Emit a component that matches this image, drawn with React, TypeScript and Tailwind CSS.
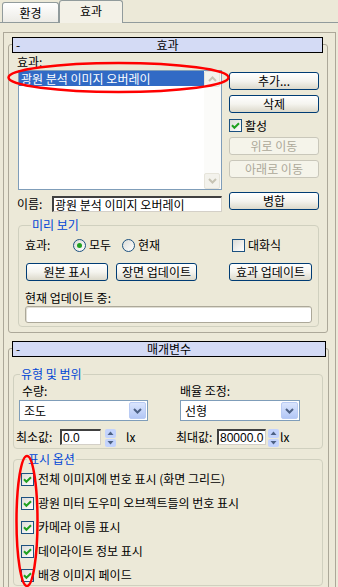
import React from 'react';

type Kids = { children?: React.ReactNode; className?: string };

const Button: React.FC<Kids & { disabled?: boolean }> = ({ children, className = '', disabled }) => (
  <div
    className={
      'h-[18px] flex items-center justify-center rounded-[3px] border whitespace-nowrap ' +
      (disabled
        ? 'border-[#c9c7ba] bg-[#f5f4ea] text-[#aca899] '
        : 'border-[#003c74] bg-linear-to-b from-white via-[#f5f4ef] to-[#dcd9cb] text-black ') +
      className
    }
  >
    {children}
  </div>
);

const CheckBox: React.FC<{ checked?: boolean }> = ({ checked }) => (
  <div className="w-[13px] h-[13px] shrink-0 border border-[#1c5180] bg-linear-to-br from-[#dcdcd7] to-white flex items-center justify-center">
    {checked && (
      <svg width="9" height="9" viewBox="0 0 9 9">
        <path d="M1 4.3 L3.4 6.8 L8 2.2" fill="none" stroke="#21a121" strokeWidth="2" />
      </svg>
    )}
  </div>
);

const Radio: React.FC<{ checked?: boolean }> = ({ checked }) => (
  <div className="w-[13px] h-[13px] shrink-0 rounded-full border border-[#1c5180] bg-linear-to-br from-[#dcdcd7] to-white flex items-center justify-center">
    {checked && <div className="w-[5px] h-[5px] rounded-full bg-[#21a121]" />}
  </div>
);

const Group: React.FC<Kids & { title: string }> = ({ title, className = '', children }) => (
  <fieldset className={'border border-[#d0d0bf] rounded-[4px] ' + className}>
    <legend className="ml-[6px] px-[1px] text-[#0046d5] leading-[14px]">{title}</legend>
    {children}
  </fieldset>
);

const Edit: React.FC<{ value: string; className?: string }> = ({ value, className = '' }) => (
  <div
    className={
      'h-[16px] bg-white border-t-2 border-l-2 border-r border-b border-t-[#404040] border-l-[#404040] border-r-[#d4d0c8] border-b-[#d4d0c8] flex items-center pl-[1px] whitespace-nowrap overflow-hidden ' +
      className
    }
  >
    {value}
  </div>
);

const Select: React.FC<{ value: string; className?: string }> = ({ value, className = '' }) => (
  <div className={'h-[21px] border border-[#7f9db9] bg-white flex items-center ' + className}>
    <span className="flex-1 pl-[4px]">{value}</span>
    <div className="w-[17px] h-[17px] mr-px rounded-[2px] border border-[#b9cbf4] bg-linear-to-b from-[#dae5fd] to-[#b3c7f6] flex items-center justify-center">
      <svg width="9" height="6" viewBox="0 0 9 6">
        <path d="M1 1 L4.5 4.5 L8 1" fill="none" stroke="#4d6185" strokeWidth="2" />
      </svg>
    </div>
  </div>
);

const Spinner: React.FC<{ className?: string }> = ({ className = '' }) => (
  <div className={'w-[11px] h-[18px] flex flex-col gap-px ' + className}>
    <div className="flex-1 rounded-[2px] bg-[#c3d3fd] flex items-center justify-center">
      <svg width="7" height="4" viewBox="0 0 7 4">
        <path d="M0.5 4 L3.5 0.5 L6.5 4Z" fill="#4d6185" />
      </svg>
    </div>
    <div className="flex-1 rounded-[2px] bg-[#c3d3fd] flex items-center justify-center">
      <svg width="7" height="4" viewBox="0 0 7 4">
        <path d="M0.5 0 L3.5 3.5 L6.5 0Z" fill="#4d6185" />
      </svg>
    </div>
  </div>
);

const ScrollArrow: React.FC<{ up?: boolean }> = ({ up }) => (
  <div className="w-[16px] h-[16px] rounded-[2px] border border-[#e6e4da] bg-[#f3f2ec] flex items-center justify-center">
    <svg width="9" height="6" viewBox="0 0 9 6">
      <path d={up ? 'M1 5 L4.5 1.5 L8 5' : 'M1 1 L4.5 4.5 L8 1'} fill="none" stroke="#c6c3b4" strokeWidth="2" />
    </svg>
  </div>
);

const Rollout: React.FC<Kids & { title: string; wide?: boolean }> = ({ title, wide, className = '', children }) => (
  <div className={'border border-[#aca899] rounded-[3px] ' + (wide ? 'w-[321px] ' : 'w-[320px] ') + className}>
    <div
      className={
        '-mt-[8px] ml-[3px] h-[16px] border border-black bg-[#d4dbf5] flex items-center ' +
        (wide ? 'w-[314px]' : 'w-[311px]')
      }
    >
      <span className="w-[14px] pl-[3px]">-</span>
      <span className="flex-1 text-center">{title}</span>
      <span className="w-[14px]" />
    </div>
    {children}
  </div>
);

export default function App() {
  return (
    <div className="relative w-[338px] h-[587px] overflow-hidden bg-[#ece9d8] text-black text-[12px] leading-[14px] font-['Noto_Sans_CJK_KR','Liberation_Sans',sans-serif]">
      {/* tabs */}
      <div className="h-[23px] pl-[2px] flex items-end border-b border-[#919b9c]">
        <div className="w-[57px] h-[20px] border-l border-t border-r border-[#919b9c] rounded-t-[3px] bg-linear-to-b from-white to-[#ecebe5] flex items-center justify-center">
          환경
        </div>
        <div className="relative z-10 -mb-px w-[64px] h-[23px] border-l border-t border-r border-[#919b9c] rounded-t-[3px] bg-[#f3f1e7] flex items-center justify-center pb-[2px]">
          효과
        </div>
      </div>

      {/* outer rollout container */}
      <div className="mt-[9px] ml-[3px] w-[333px] h-[560px] border-l border-t border-r border-[#aca899] pl-[4px] pt-[11px]">
        <Rollout title="효과">
          <div className="pl-[8px] flex items-start">
            <div className="w-[205px]">
              <div className="mt-[2px] h-[15px]">효과:</div>
              <div className="ml-px w-[204px] h-[120px] border border-[#7f9db9] bg-white flex">
                <div className="flex-1">
                  <div className="h-[15px] bg-[#316ac5] text-white pl-[2px] flex items-center whitespace-nowrap">
                    광원 분석 이미지 오버레이
                  </div>
                </div>
                <div className="w-[17px] flex flex-col justify-between pr-px bg-[#fbfbf9]">
                  <ScrollArrow up />
                  <ScrollArrow />
                </div>
              </div>
              <div className="mt-[6px] h-[16px] flex items-center">
                <span className="w-[35px]">이름:</span>
                <Edit value="광원 분석 이미지 오버레이" className="w-[170px]" />
              </div>
            </div>
            <div className="ml-[7px] w-[90px] mt-[19px] flex flex-col">
              <Button>추가...</Button>
              <Button className="mt-[5px]">삭제</Button>
              <div className="mt-[6px] h-[13px] flex items-center gap-[3px]">
                <CheckBox checked />
                <span>활성</span>
              </div>
              <Button disabled className="mt-[5px]">위로 이동</Button>
              <Button disabled className="mt-[5px]">아래로 이동</Button>
              <Button className="mt-[14px]">병합</Button>
            </div>
          </div>

          <div className="pl-[9px] pb-[5px]">
            <Group title="미리 보기" className="mt-[6px] w-[301px] pl-[6px] pb-[3px]">
              <div className="mt-[5px] h-[16px] flex items-center">
                <span className="w-[48px]">효과:</span>
                <Radio checked />
                <span className="ml-[3px] w-[33px]">모두</span>
                <Radio />
                <span className="ml-[3px] w-[94px]">현재</span>
                <CheckBox />
                <span className="ml-[3px]">대화식</span>
              </div>
              <div className="mt-[10px] h-[18px] flex">
                <Button className="ml-px w-[82px]">원본 표시</Button>
                <Button className="ml-[8px] w-[81px]">장면 업데이트</Button>
                <Button className="ml-[32px] w-[83px]">효과 업데이트</Button>
              </div>
              <div className="mt-[10px] h-[14px]">현재 업데이트 중:</div>
              <div className="mt-px w-[287px] h-[17px] rounded-[3px] border border-[#aca899] bg-white shadow-[inset_1px_1px_0_#e0ded4]" />
            </Group>
          </div>
        </Rollout>

        <Rollout title="매개변수" wide className="mt-[15px] h-[260px]">
          <div className="pl-[4px]">
            <Group title="유형 및 범위" className="mt-[10px] w-[310px] pb-[2px]">
              <div className="mt-[3px] h-[14px] flex pl-[8px]">
                <span className="w-[158px]">수량:</span>
                <span>배율 조정:</span>
              </div>
              <div className="mt-[2px] flex pl-[5px]">
                <Select value="조도" className="w-[129px]" />
                <Select value="선형" className="ml-[32px] w-[120px]" />
              </div>
              <div className="mt-[8px] h-[17px] flex items-start pl-[2px]">
                <div className="w-[160px] flex items-start">
                  <span className="w-[44px] leading-[16px]">최소값:</span>
                  <Edit value="0.0" className="w-[41px] font-['Liberation_Sans',sans-serif]" />
                  <Spinner className="ml-[4px]" />
                  <span className="ml-[10px] leading-[16px]">lx</span>
                </div>
                <span className="w-[41px] leading-[16px]">최대값:</span>
                <Edit value="80000.0" className="w-[49px] font-['Liberation_Sans',sans-serif]" />
                <Spinner className="ml-[2px]" />
                <span className="ml-px leading-[16px]">lx</span>
              </div>
            </Group>

            <Group title="표시 옵션" className="mt-[3px] w-[310px] pl-[7px] pb-[3px]">
              <div className="mt-[6px] flex flex-col gap-[10px]">
                {[
                  '전체 이미지에 번호 표시 (화면 그리드)',
                  '광원 미터 도우미 오브젝트들의 번호 표시',
                  '카메라 이름 표시',
                  '데이라이트 정보 표시',
                  '배경 이미지 페이드',
                ].map((t) => (
                  <div key={t} className="h-[14px] flex items-center gap-[4px] whitespace-nowrap">
                    <CheckBox checked />
                    <span>{t}</span>
                  </div>
                ))}
              </div>
            </Group>
          </div>
        </Rollout>
      </div>

      {/* red annotation ellipses */}
      <svg className="absolute inset-0 pointer-events-none" width="338" height="587" viewBox="0 0 338 587">
        <ellipse cx="118.5" cy="77.5" rx="110" ry="14.5" fill="none" stroke="#ff0000" strokeWidth="2.5" />
        <ellipse cx="27" cy="521" rx="10.5" ry="65" fill="none" stroke="#ff0000" strokeWidth="2.5" />
      </svg>
    </div>
  );
}
